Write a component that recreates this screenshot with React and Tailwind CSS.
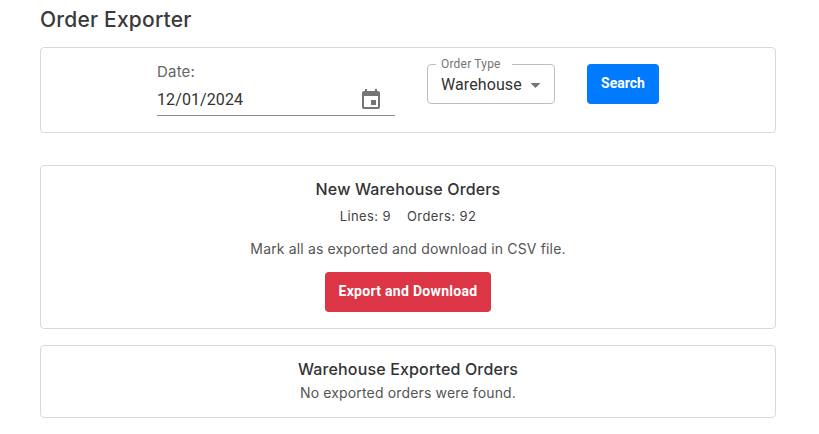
const montserrat = "font-['Inter','Noto_Sans',sans-serif]";

// Material "event" calendar icon
const CalendarIcon = () => (
  <svg width="24" height="24" viewBox="0 0 24 24" fill="#757575">
    <path d="M17 12h-5v5h5v-5zM16 1v2H8V1H6v2H5c-1.11 0-1.99.9-1.99 2L3 19c0 1.1.89 2 2 2h14c1.1 0 2-.9 2-2V5c0-1.1-.9-2-2-2h-1V1h-2zm3 18H5V8h14v11z" />
  </svg>
);

const App = () => {
  return (
    <div className={`w-[819px] h-[434px] overflow-hidden bg-white pl-10 text-[#333] ${montserrat}`}>
      <h1 className="h-[47px] pt-2 text-[21px] leading-6 font-medium tracking-[0.2px] text-[#3a3a3a]">Order Exporter</h1>

      <div className="w-[736px] h-[86px] border border-[#d9d9d9] rounded flex pl-[116px]">
        <div className="w-[238px] mt-[14px] h-[54px] border-b border-[#8c8c8c] relative">
          <div className="text-[15px] leading-5 text-[#666] tracking-[0.2px]">Date:</div>
          <div className="flex items-center justify-between mt-[6px] pr-3 font-['Roboto',sans-serif] text-[16px] leading-6 text-[#333] tracking-[0.1px]">
            <span>12/01/2024</span>
            <CalendarIcon />
          </div>
        </div>

        <div className="relative ml-8 mt-4 w-[128px] h-10 border border-[#bdbdbd] rounded font-['Roboto',sans-serif] flex items-center pl-[13px] pt-[2px]">
          <span className="absolute -top-[8px] left-[8px] bg-white pl-[5px] pr-[11px] text-[12px] leading-[14px] tracking-[0.2px] text-[#757575]">Order Type</span>
          <span className="text-[16px] leading-6 tracking-[0.1px] text-[#333]">Warehouse</span>
          <svg className="ml-2" width="11" height="5" viewBox="0 0 10 5" fill="#757575"><path d="M0 0l5 5 5-5z" /></svg>
        </div>

        <button className="ml-8 mt-4 w-[72px] h-10 pb-px rounded bg-[#007bff] text-white text-[14px] font-bold font-['Roboto',sans-serif]">Search</button>
      </div>

      <div className="w-[736px] h-[164px] mt-8 border border-[#d9d9d9] rounded flex flex-col items-center pt-[13px]">
        <h2 className="text-[16px] leading-5 font-medium tracking-[0.15px] text-[#333]">New Warehouse Orders</h2>
        <div className="mt-[7px] flex gap-4 text-[13px] leading-5 tracking-[0.4px] text-[#444]">
          <span>Lines: 9</span>
          <span>Orders: 92</span>
        </div>
        <p className="mt-[13px] text-[14px] leading-5 tracking-[0.15px] text-[#555]">Mark all as exported and download in CSV file.</p>
        <button className="mt-[13px] w-[166px] h-10 pb-px rounded bg-[#dc3545] text-white text-[14px] tracking-[0.3px] font-bold font-['Roboto',sans-serif]">Export and Download</button>
      </div>

      <div className="w-[736px] h-[73px] mt-4 border border-[#d9d9d9] rounded flex flex-col items-center pt-[13px]">
        <h2 className="text-[16px] leading-5 font-medium tracking-[0.15px] text-[#333]">Warehouse Exported Orders</h2>
        <p className="mt-[4px] text-[14px] leading-5 tracking-[0.15px] text-[#555]">No exported orders were found.</p>
      </div>
    </div>
  );
};

export default App;
